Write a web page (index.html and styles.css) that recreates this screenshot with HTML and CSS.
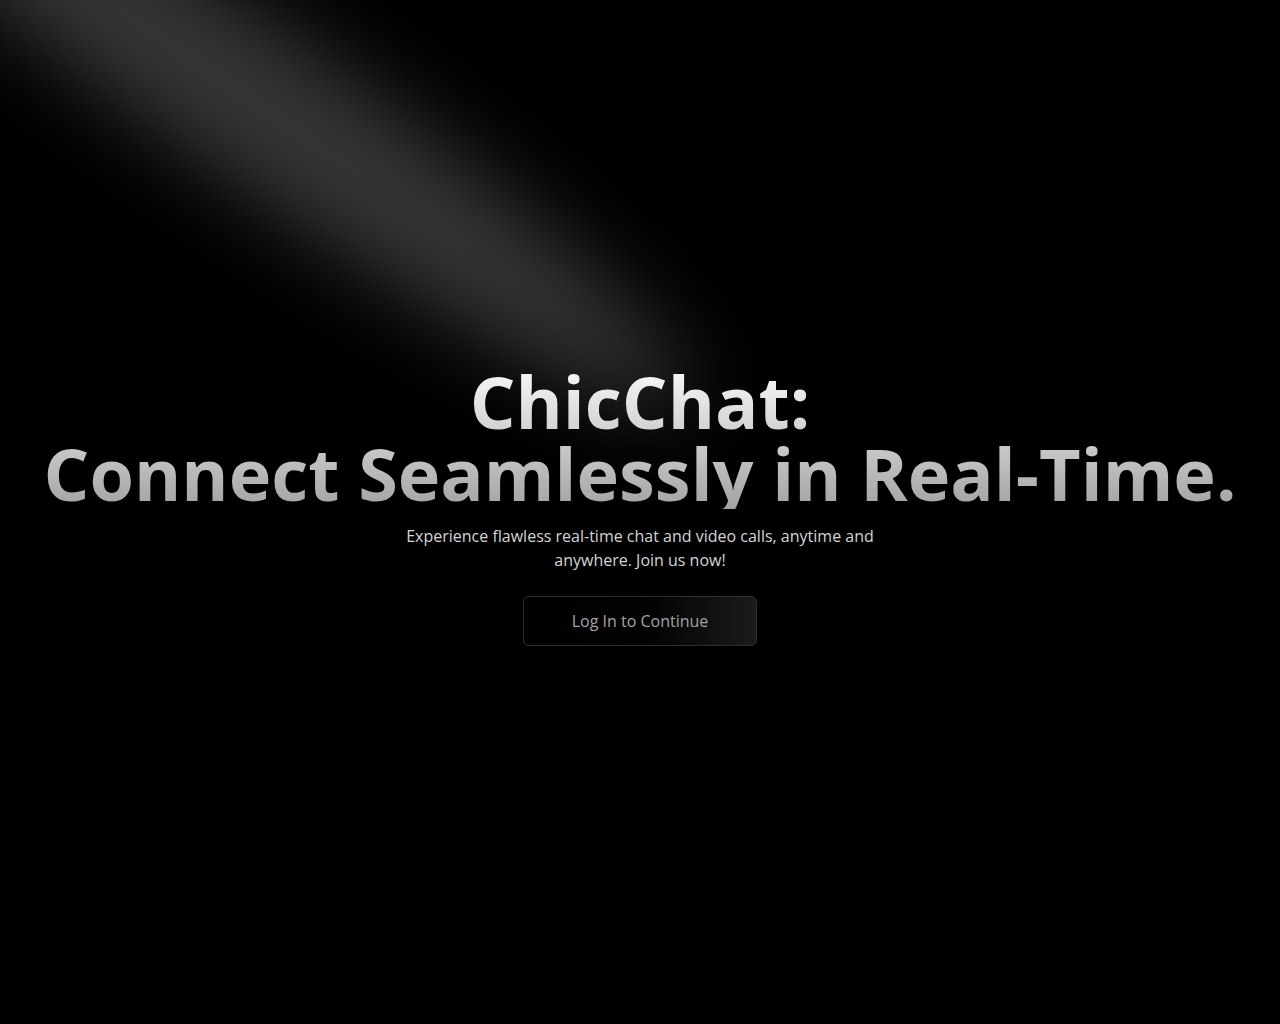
FILE: index.html
```html
<!DOCTYPE html>
<html lang="en">
<head>
<meta charset="utf-8">
<title>ChicChat</title>
<link rel="stylesheet" href="styles.css">
</head>
<body>
<main class="hero">
  <svg class="spotlight" width="1280" height="1024" viewBox="0 0 1280 1024" fill="none" aria-hidden="true">
    <defs>
      <filter id="spot-blur" x="-600" y="-600" width="2400" height="2200" filterUnits="userSpaceOnUse" color-interpolation-filters="sRGB">
        <feGaussianBlur stdDeviation="42.9"/>
      </filter>
    </defs>
    <g filter="url(#spot-blur)">
      <ellipse cx="240" cy="93" rx="546.5" ry="77.65" transform="rotate(34.68 240 93)" fill="#ffffff" fill-opacity="0.21"/>
    </g>
  </svg>
  <section class="content">
    <h1 class="title">ChicChat: <br>Connect Seamlessly in Real-Time.</h1>
    <p class="lead">Experience flawless real-time chat and video calls, anytime and anywhere. Join us now!</p>
    <button class="cta" type="button">Log In to Continue</button>
  </section>
</main>
</body>
</html>
```
FILE: styles.css
```css
html, body {
  margin: 0;
  padding: 0;
  background: #000;
}
body {
  font-family: "Open Sans", "Noto Sans", sans-serif;
  color: #d4d4d4;
}
.hero {
  position: relative;
  width: 100%;
  height: 1024px;
  overflow: hidden;
  background: #000;
  display: flex;
  align-items: center;
  justify-content: center;
}
.spotlight {
  position: absolute;
  left: 0;
  top: 0;
  pointer-events: none;
  z-index: 1;
}
.content {
  position: relative;
  z-index: 2;
  display: flex;
  flex-direction: column;
  align-items: center;
  padding-bottom: 13px;
}
.title {
  margin: 0;
  font-size: 72px;
  line-height: 72px;
  font-weight: 700;
  text-align: center;
  background: linear-gradient(to bottom, #fafafa, #a3a3a3);
  -webkit-background-clip: text;
  background-clip: text;
  color: transparent;
  -webkit-text-fill-color: transparent;
}
.lead {
  margin: 15px 0 0;
  max-width: 512px;
  font-size: 16px;
  line-height: 24px;
  text-align: center;
  color: #d4d4d4;
}
.cta {
  margin-top: 24px;
  padding: 12px 48px;
  font-family: "Open Sans", "Noto Sans", sans-serif;
  font-size: 16px;
  line-height: 24px;
  color: #a3a3a3;
  border: 1px solid #2e2e2e;
  border-radius: 6px;
  background: linear-gradient(to right, #000 0%, #030303 55%, #1b1b1b 100%);
  cursor: pointer;
}
```
